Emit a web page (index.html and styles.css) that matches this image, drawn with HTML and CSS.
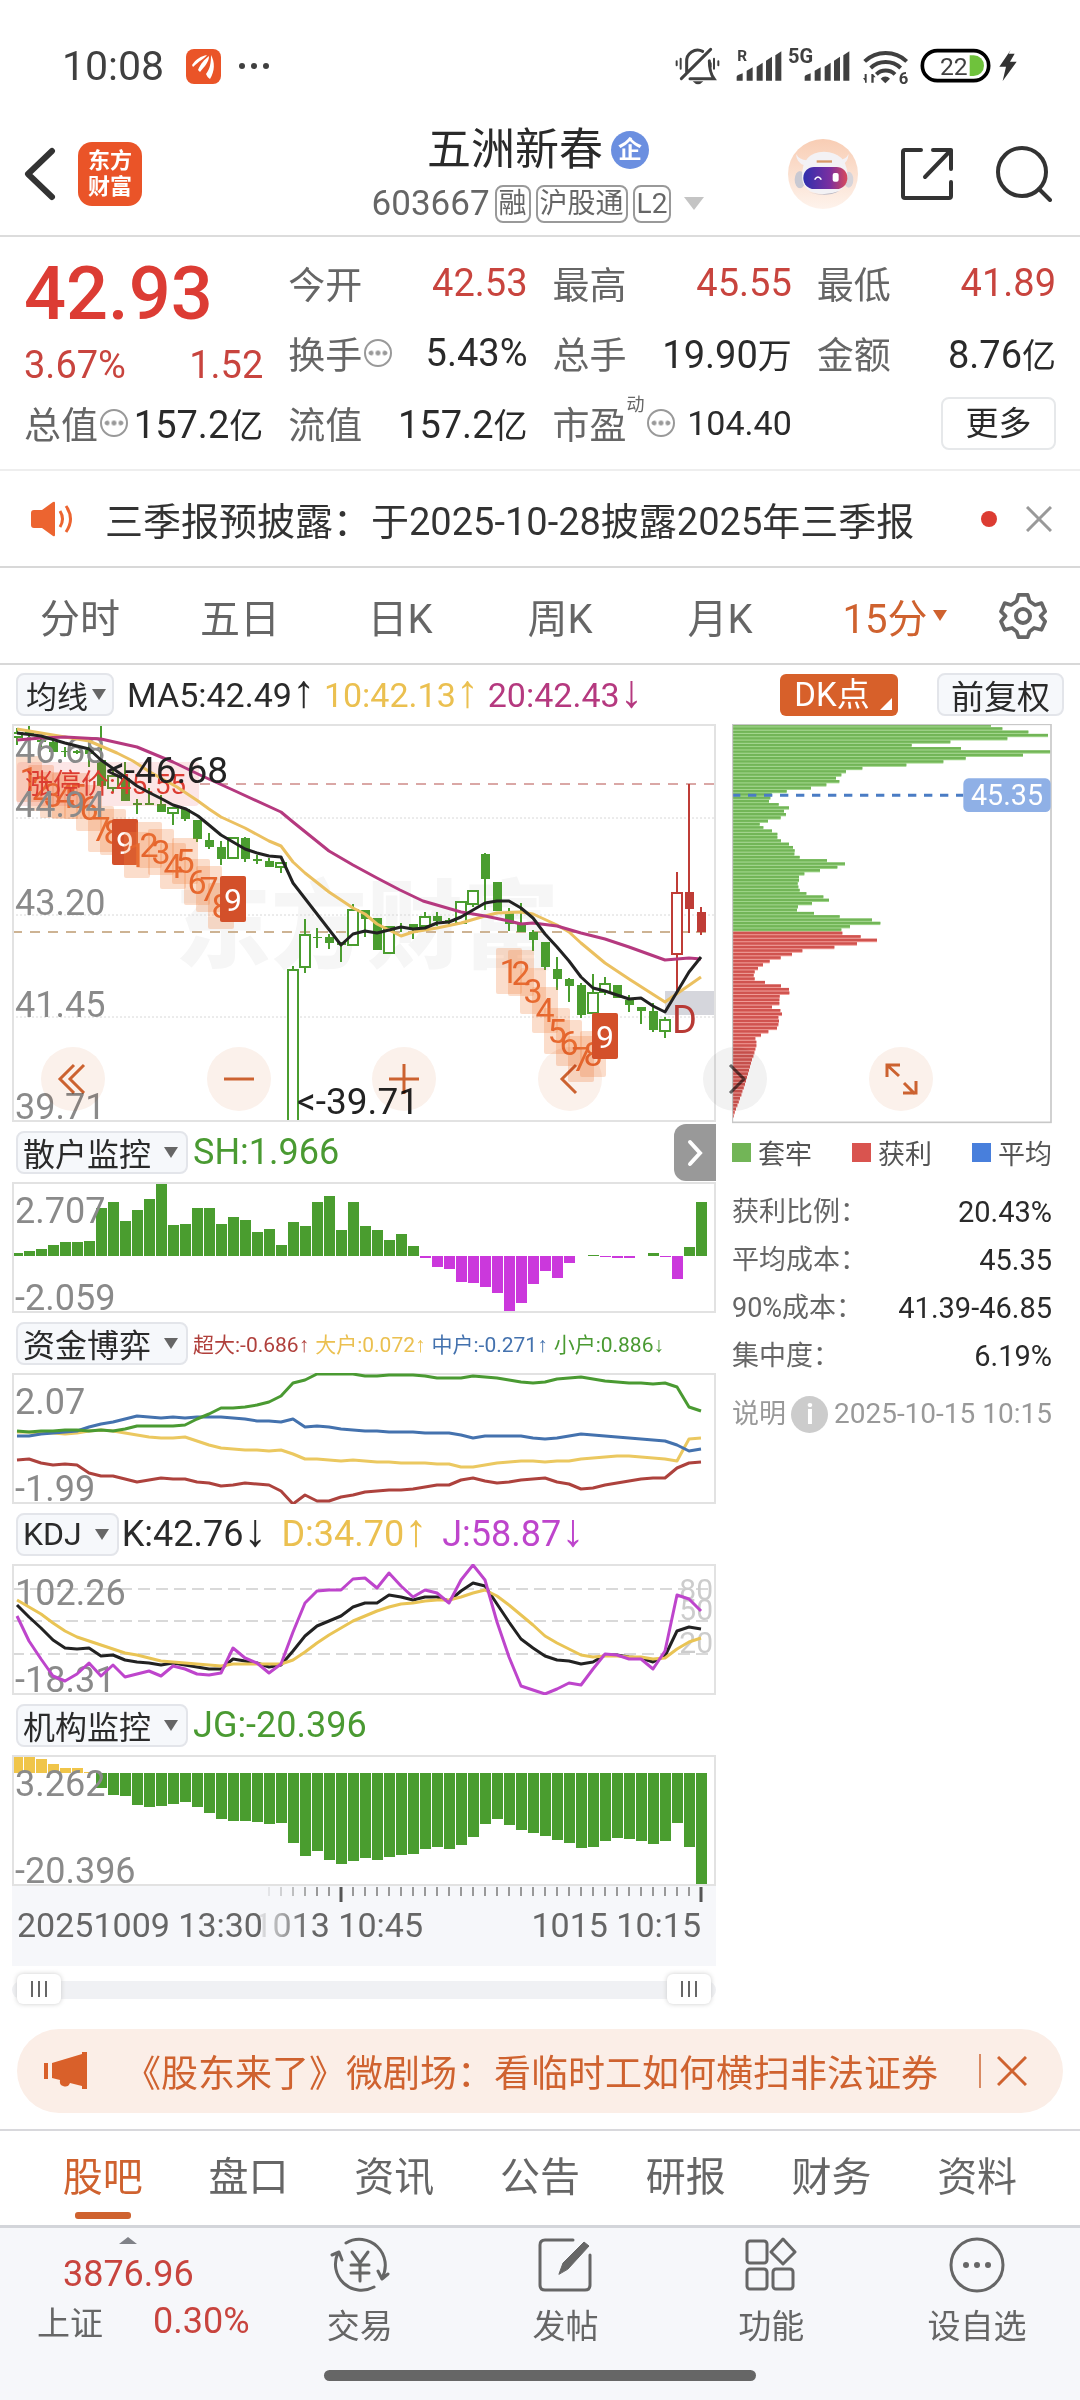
FILE: index.html
```html
<!DOCTYPE html>
<html lang="zh-CN">
<head>
<meta charset="utf-8">
<meta name="viewport" content="width=device-width, initial-scale=1">
<title>五洲新春 603667</title>
<link rel="stylesheet" href="styles.css">
</head>
<body>
<div class="status">
  <span class="clock">10:08</span>
  <svg class="status-app" viewBox="0 0 35 35" aria-hidden="true"><rect width="35" height="35" rx="8" fill="#ea5428"/><g fill="#fff"><path d="M6 16c4-6 9-9 15-10-3 4-8 6-14 12z"/><path d="M12 21c3-7 6-10 11-14 0 6-4 10-9 16z"/><path d="M25 6c4 7 4 16-1 24-2-1-3-3-4-5 4-5 5-11 5-19z"/></g></svg>
  <span class="more-dots"><i></i><i></i><i></i></span>
  <svg class="status-icons" viewBox="70 45 1032 129" aria-hidden="true">
    <g fill="none" stroke="#404040" stroke-width="9" stroke-linecap="round">
      <path d="M108 130V96a33 33 0 0 1 48-32M176 92c0 26 4 40 14 54H118M92 146l88-88"/>
      <path stroke-width="6" d="M78 94v12M90 86v30M190 86v30M203 94v12M180 100v10"/>
    </g>
    <path fill="#404040" d="M126 154h32q-16 18-32 0z"/>
    <g class="st-text"><text x="260" y="94" font-size="46">R</text><text x="412" y="98" font-size="60">5G</text><text x="744" y="162" font-size="50">6</text></g>
    <g fill="#404040">
      <path d="M258 152v-12q0-4 18-10v22zM288 152v-30l18-10v40zM318 152v-42l18-12v54zM346 152V92l18-12v72zM374 152V76l18-12v88z"/>
      <path d="M462 152v-12q0-4 18-10v22zM492 152v-30l18-10v40zM522 152v-42l18-12v54zM550 152V92l18-12v72zM578 152V76l18-12v88z"/>
      <path d="M690 146a19 19 0 0 1 28 0l-14 14z"/>
      <path d="M648 132v26h-5v-6l-6-8h5v-12zM662 132h5l8 10h-6v16h-7z"/>
    </g>
    <g fill="none" stroke="#404040" stroke-width="12"><path d="M642 94a92 92 0 0 1 126 0M660 114a66 66 0 0 1 90 0M677 133a40 40 0 0 1 56 0"/></g>
    <rect x="815" y="62" width="199" height="90" rx="45" fill="#fff" stroke="#000" stroke-width="11"/>
    <path d="M957 76h12a31 31 0 0 1 0 62h-12z" fill="#6fc23c"/>
    <text x="868" y="134" font-size="74" fill="#404040">22</text>
    <path d="M1080 60l-34 50h20l-10 43 42-58h-20l14-24h-18z" fill="#333"/>
  </svg>
</div>

<header class="header">
  <div class="header-left">
    <button class="bare" aria-label="返回"><svg width="32" height="56" viewBox="0 0 32 56"><path d="M28 5L4 28l24 23" class="ink" stroke-width="6"/></svg></button>
    <span class="brand">东方<br>财富</span>
  </div>
  <div class="stock">
    <h1>五洲新春<span class="corp">企</span></h1>
    <div class="code">603667<span class="tag">融</span><span class="tag">沪股通</span><span class="tag">L2</span><span class="tri tri-light"></span></div>
  </div>
  <div class="header-right">
    <button class="bare" aria-label="智能助手"><svg width="70" height="70" viewBox="0 0 210 210">
      <defs><linearGradient id="halo" x2="0" y2="1"><stop stop-color="#f8cdb4"/><stop offset="1" stop-color="#fef3ec"/></linearGradient><linearGradient id="visor"><stop stop-color="#2f2fae"/><stop offset=".6" stop-color="#7a2fa0"/><stop offset="1" stop-color="#d94a5a"/></linearGradient></defs>
      <circle cx="105" cy="105" r="105" fill="url(#halo)"/>
      <path d="M24 45q2 26 24 34l14-16Q36 66 24 45zM182 45q-2 26-22 34l-14-16q26 2 36-18z" fill="#f4f1f4"/>
      <ellipse cx="36" cy="122" rx="16" ry="26" fill="#c9c9d2"/><ellipse cx="182" cy="122" rx="14" ry="24" fill="#d6d4da"/>
      <path d="M42 112q0-72 66-74 66 2 70 66 4 58-70 62-66-2-66-54z" fill="#f3f2f5"/>
      <path d="M60 158q46 16 94-2-44 22-94 2z" fill="#b9b7c2"/>
      <rect x="46" y="84" width="132" height="66" rx="32" fill="url(#visor)"/>
      <path d="M80 122q10-16 20 0" fill="none" stroke="#fff" stroke-width="5"/><rect x="134" y="102" width="18" height="26" rx="6" fill="#fff"/><path d="M86 64h46v7H86z" fill="#d99a68"/></svg></button>
    <button class="bare" aria-label="分享"><svg width="54" height="54" viewBox="0 0 54 54"><path class="ink" stroke-width="4" d="M21 3H5q-2 0-2 2v44q0 2 2 2h44q2 0 2-2V35M33 3h18v19M51 3L25 30"/></svg></button>
    <button class="bare" aria-label="搜索"><svg width="56" height="56" viewBox="0 0 56 56"><circle class="ink" stroke-width="4" cx="26" cy="26" r="24"/><path class="ink" stroke-width="4" d="M43 43l11 11"/></svg></button>
  </div>
</header>

<section class="quote">
  <div class="price"><strong>42.93</strong><div><span>3.67%</span><span>1.52</span></div></div>
  <div class="cell"><span>今开</span><b class="up">42.53</b></div>
  <div class="cell"><span>最高</span><b class="up">45.55</b></div>
  <div class="cell"><span>最低</span><b class="up">41.89</b></div>
  <div class="cell"><span>换手<i class="tip"></i></span><b>5.43%</b></div>
  <div class="cell"><span>总手</span><b>19.90<em>万</em></b></div>
  <div class="cell"><span>金额</span><b>8.76<em>亿</em></b></div>
  <div class="cell"><span>总值<i class="tip"></i></span><b>157.2<em>亿</em></b></div>
  <div class="cell"><span>流值</span><b>157.2<em>亿</em></b></div>
  <div class="cell"><span>市盈<sup>动</sup><i class="tip"></i></span><b class="small">104.40</b></div>
  <div class="cell cell-end"><button class="more">更多</button></div>
</section>

<div class="notice">
  <svg width="44" height="36" viewBox="0 0 44 36" aria-hidden="true"><path d="M3 9h8L22 1q2-1 2 1v32q0 2-2 1L11 27H3q-3 0-3-3V12q0-3 3-3z" fill="#ec6430"/><path d="M29 10q5 8 0 16M35 5q9 13 0 26" fill="none" stroke="#ec6430" stroke-width="3"/></svg>
  <a href="#notice">三季报预披露：于2025-10-28披露2025年三季报</a>
  <span class="dot"></span>
  <button class="bare" aria-label="关闭"><svg width="26" height="26" viewBox="0 0 26 26"><path d="M1 1l24 24M25 1L1 25" stroke="#999" stroke-width="3"/></svg></button>
</div>

<nav class="periods">
  <a href="#m">分时</a><a href="#d5">五日</a><a href="#d">日K</a><a href="#w">周K</a><a href="#mo">月K</a>
  <a href="#m15" class="on">15分<span class="tri tri-on"></span></a>
  <button class="bare" aria-label="设置"><svg width="48" height="50" viewBox="0 0 48 50"><path d="M19 2h10l2 7 6 4 7-2 4 9-5 5 5 6-4 9-8-2-5 4-2 6H19l-2-6-5-4-8 2-4-9 5-6-5-5 4-9 7 2 6-4z" transform="translate(2 2) scale(.92)" fill="none" stroke="#666" stroke-width="4" stroke-linejoin="round"/><circle cx="24" cy="25" r="7" fill="none" stroke="#666" stroke-width="4"/></svg></button>
</nav>

<div class="ma">
  <button class="pick pick-tight">均线<span class="tri"></span></button>
  <span class="ma-vals"><span>MA5:42.49<i class="arrow">↑</i></span><span class="gold">10:42.13<i class="arrow">↑</i></span><span class="plum">20:42.43<i class="arrow">↓</i></span></span>
  <button class="dk">DK点</button>
  <button class="pick">前复权</button>
</div>

<main class="charts">
  <div class="left">
    <svg id="kline" class="plot" viewBox="0 0 704 398" role="img" aria-label="15分K线">
      <text class="mark" x="163" y="236">东方财富</text>
      <g class="grid"><path d="M0 94H704M0 191H704M0 293H704"/></g>
      <path d="M188 60H704" stroke="#b5504c" stroke-dasharray="10 8"/>
      <path d="M0 208H704" stroke="#cdb393" stroke-width="2" stroke-dasharray="10 8"/>
      <rect x="653" y="267" width="51" height="24" fill="#d5d6dc"/>
      <g id="candles"></g>
      <g id="td"></g>
      <rect x="5" y="38" width="182" height="44" rx="4" fill="#e84040" fill-opacity=".13"/>
      <text x="13" y="70" font-size="28" fill="#dc3c32">涨停价:45.55</text>
      <g class="axis"><text x="3" y="39">46.68</text><text x="3" y="93">44.94</text><text x="3" y="191">43.20</text><text x="3" y="293">41.45</text><text x="3" y="395">39.71</text></g>
      <g id="averages"></g>
      <g class="note"><text x="94" y="59">&lt;-46.68</text><text x="285" y="390">&lt;-39.71</text></g>
      <text x="660" y="309" font-size="38" fill="#b83a35">D</text>
      <rect class="frame" x="1" y="1" width="702" height="396"/>
    </svg>

    <div class="sub-head"><button class="pick">散户监控<span class="tri"></span></button><span class="green">SH:1.966</span><button class="next" aria-label="展开"><svg width="16" height="28" viewBox="0 0 16 28"><path d="M3 3l10 11L3 25" fill="none" stroke="#fff" stroke-width="4" stroke-linecap="round"/></svg></button></div>
    <svg id="retail" class="plot" viewBox="0 0 704 131" role="img" aria-label="散户监控"><g class="bars"></g><g class="axis"><text x="3" y="41">2.707</text><text x="3" y="128">-2.059</text></g><rect class="frame" x="1" y="1" width="702" height="129"/></svg>

    <div class="sub-head"><button class="pick">资金博弈<span class="tri"></span></button><span class="flow"><span class="red">超大:-0.686↑</span><span class="gold">大户:0.072↑</span><span class="blue">中户:-0.271↑</span><span class="green">小户:0.886↓</span></span></div>
    <svg id="flow" class="plot" viewBox="0 0 704 131" role="img" aria-label="资金博弈"><rect class="frame" x="1" y="1" width="702" height="129"/><g class="axis"><text x="3" y="41">2.07</text><text x="3" y="128">-1.99</text></g><g class="lines"></g></svg>

    <div class="sub-head kdj"><button class="pick">KDJ<span class="tri"></span></button><span>K:42.76<i class="arrow">↓</i></span><span class="gold">D:34.70<i class="arrow">↑</i></span><span class="violet">J:58.87<i class="arrow">↓</i></span></div>
    <svg id="kdj" class="plot" viewBox="0 0 704 131" role="img" aria-label="KDJ"><path d="M0 25H704M0 57H704M0 90H704" stroke="#d9d9d9" stroke-width="2" stroke-dasharray="12 6"/><rect class="frame" x="1" y="1" width="702" height="129"/><g class="axis"><text x="3" y="41">102.26</text><text x="3" y="128">-18.31</text></g><g class="levels"><text x="701" y="36">80</text><text x="701" y="56">50</text><text x="701" y="89">20</text></g><g class="lines"></g></svg>

    <div class="sub-head"><button class="pick">机构监控<span class="tri"></span></button><span class="green">JG:-20.396</span></div>
    <svg id="inst" class="plot" viewBox="0 0 704 131" role="img" aria-label="机构监控"><g class="bars"></g><g class="axis"><text x="3" y="41">3.262</text><text x="3" y="128">-20.396</text></g><rect class="frame" x="1" y="1" width="702" height="129"/></svg>

    <svg id="time" class="plot time" viewBox="0 0 704 80" role="img" aria-label="时间轴">
      <defs><linearGradient id="fade"><stop offset=".04" stop-color="#666" stop-opacity=".15"/><stop offset=".32" stop-color="#666"/></linearGradient></defs>
      <g class="ticks"></g>
      <text x="5" y="51">20251009 13:30</text><text x="411" y="51" text-anchor="end" fill="url(#fade)">1013 10:45</text><text x="689" y="51" text-anchor="end">1015 10:15</text>
    </svg>
    <div class="range"><input type="range" value="0" aria-label="起始"><input type="range" value="100" aria-label="结束"></div>
  </div>

  <aside class="right">
    <svg id="chips" class="plot" viewBox="98 192 960 1200" role="img" aria-label="筹码分布">
      <g class="bars"></g>
      <path d="M98 406H792" stroke="#4a7cc4" stroke-width="9" stroke-dasharray="25 23"/>
      <rect x="99" y="193" width="956" height="1194" fill="none" stroke="#c8c8c8" stroke-width="5"/>
      <rect x="792" y="355" width="262" height="101" rx="16" fill="#8fb0e6"/>
      <text x="923" y="436" text-anchor="middle" font-size="86" fill="#fff">45.35</text>
    </svg>
    <div class="legend"><span><i class="k1"></i>套牢</span><span><i class="k2"></i>获利</span><span><i class="k3"></i>平均</span></div>
    <dl class="stats">
      <div><dt>获利比例：</dt><dd>20.43%</dd></div>
      <div><dt>平均成本：</dt><dd>45.35</dd></div>
      <div><dt>90%成本：</dt><dd>41.39-46.85</dd></div>
      <div><dt>集中度：</dt><dd>6.19%</dd></div>
    </dl>
    <div class="asof"><span>说明</span><i>i</i><time>2025-10-15 10:15</time></div>
  </aside>

  <div class="tools">
    <button aria-label="最早"><svg viewBox="0 0 64 64"><path d="M33 18L19 32l14 14M43 18L29 32l14 14"/></svg></button>
    <button aria-label="缩小"><svg viewBox="0 0 64 64"><path d="M17 32h30"/></svg></button>
    <button aria-label="放大"><svg viewBox="0 0 64 64"><path d="M17 32h30M32 17v30"/></svg></button>
    <button aria-label="左移"><svg viewBox="0 0 64 64"><path d="M38 18L24 32l14 14"/></svg></button>
    <button aria-label="右移" class="off"><svg viewBox="0 0 64 64"><path d="M27 18l14 14-14 14"/></svg></button>
    <button aria-label="全屏"><svg viewBox="0 0 64 64"><path d="M30 29L18 18M18 30V18h13M35 36l11 11M47 34v12H34"/></svg></button>
  </div>
</main>

<div class="banner">
  <svg width="44" height="38" viewBox="0 0 44 38" aria-hidden="true"><path d="M0 11h4v16H0zM8 11l30-9V0h5v37h-5v-3l-12-3q-2 5-7 3-4-1-3-6l-8-2z" fill="#d9602a"/></svg>
  <a href="#promo">《股东来了》微剧场：看临时工如何横扫非法证券</a>
  <button class="bare" aria-label="关闭广告"><svg width="30" height="30" viewBox="0 0 30 30"><path d="M1 1l28 28M29 1L1 29" stroke="#cf622f" stroke-width="3"/></svg></button>
</div>

<nav class="tabs"><a href="#bar" class="on">股吧</a><a href="#pk">盘口</a><a href="#zx">资讯</a><a href="#gg">公告</a><a href="#yb">研报</a><a href="#cw">财务</a><a href="#zl">资料</a></nav>

<footer class="dock">
  <div class="dock-row">
    <div class="index"><span class="tri-up"></span><b>3876.96</b><div><span>上证</span><b>0.30%</b></div></div>
    <button><svg viewBox="0 0 60 56"><path d="M16 6a26 26 0 0 1 36 35M44 50A26 26 0 0 1 8 16M2 18l7-3 3 8M58 37l-6 5-4-8"/><path d="M22 15l8 11 8-11M30 26v18M21 28h18M21 36h18"/></svg>交易</button>
    <button><svg viewBox="0 0 60 56"><path d="M38 3H10q-5 0-5 5v40q0 5 5 5h40q5 0 5-5V18"/><path d="M24 37l4-11L49 5l5 4-21 23z" fill="#666" stroke-width="1"/></svg>发帖</button>
    <button><svg viewBox="0 0 60 56"><rect x="6" y="4" width="20" height="22" rx="3"/><rect x="6" y="32" width="20" height="20" rx="3"/><rect x="32" y="32" width="20" height="20" rx="3"/><path d="M42 2l12 13-12 12-12-12z"/></svg>功能</button>
    <button><svg viewBox="0 0 60 56"><circle cx="30" cy="28" r="26"/><g fill="#666" stroke="none"><circle cx="19" cy="28" r="3"/><circle cx="30" cy="28" r="3"/><circle cx="41" cy="28" r="3"/></g></svg>设自选</button>
  </div>
  <div class="home"></div>
</footer>
<script src="script.js"></script>
</body>
</html>
```
FILE: styles.css
```css
* { box-sizing: border-box; }
body { margin: 0; background: #fff; color: #2a2a2a; font-family: Roboto, "Liberation Sans", "Noto Sans CJK SC", sans-serif; }
a { color: inherit; text-decoration: none; }
button { font: inherit; color: inherit; cursor: pointer; padding: 0; border: 0; background: none; }
svg { display: block; flex: none; }
b { font-weight: 400; }
em { font-style: normal; font-size: 34px; }
.ink { fill: none; stroke: #333; stroke-linecap: round; stroke-linejoin: round; }
.green { color: #4a9a32; }
.gold { color: #ebc050; }
.plum { color: #b5397f; }
.violet { color: #be45cc; }
.blue { color: #4472ae; }
.red { color: #b0403c; }
.arrow { font: 46px/20px "Liberation Sans", sans-serif; }

.tri { display: inline-block; border: 7px solid transparent; border-top: 11px solid #666; border-bottom: 0; }
.tri-light { border-width: 13px 10px 0; border-top-color: #c4c4c4; margin-left: 8px; }
.tri-on { border-top-color: #cf622f; margin-left: 6px; }

.status { display: flex; align-items: center; min-height: 120px; padding: 12px 62px 0 62px; }
.clock { font-size: 41px; color: #404040; }
.status-app { width: 35px; margin-left: 22px; }
.more-dots { display: flex; gap: 6px; margin-left: 18px; }
.more-dots i { width: 6px; height: 6px; border-radius: 50%; background: #404040; }
.status-icons { width: 344px; margin-left: auto; }
.st-text text { font-weight: 700; fill: #404040; }

.header { display: grid; grid-template-columns: 1fr auto 1fr; align-items: center; min-height: 117px; padding: 0 28px 8px 24px; border-bottom: 2px solid #dcdcdc; }
.header-left, .header-right { display: flex; align-items: center; }
.header-left { gap: 22px; }
.header-right { justify-content: flex-end; gap: 42px; }
.brand { display: grid; place-content: center; width: 64px; height: 64px; border-radius: 14px; background: #ea5428; color: #fff; font-size: 22px; line-height: 26px; font-weight: 700; }
.stock { text-align: center; }
h1 { display: flex; justify-content: center; align-items: center; gap: 8px; margin: 0 0 4px; font-size: 44px; line-height: 56px; font-weight: 400; }
.corp { width: 38px; line-height: 38px; border-radius: 50%; background: #6b8fe0; color: #fff; font-size: 24px; font-weight: 700; }
.code { display: flex; align-items: center; justify-content: center; gap: 5px; font-size: 35px; line-height: 44px; color: #666; }
.tag { border: 2px solid #999; border-radius: 8px; padding: 0 2px; font-size: 28px; line-height: 34px; }

.quote { display: grid; grid-template-columns: repeat(4, 1fr); grid-auto-rows: 70px; column-gap: 25px; padding: 11px 24px; border-bottom: 2px solid #eee; }
.price { grid-row: span 2; color: #dc3c34; }
.price strong { display: block; font-size: 74px; line-height: 92px; font-weight: 500; }
.price div { display: flex; justify-content: space-between; font-size: 38px; line-height: 50px; color: #c8443e; }
.cell { display: flex; align-items: center; justify-content: space-between; font-size: 38px; }
.cell > span { display: flex; align-items: center; font-size: 37px; color: #666; }
.cell .small { font-size: 34px; }
.cell-end { justify-content: flex-end; }
.up { color: #c8443e; }
.tip { width: 28px; height: 28px; margin-left: 2px; border: 2px solid #999; border-radius: 50%; background: radial-gradient(circle, #999 2px, transparent 3px) center / 7px 7px; background-clip: content-box; padding: 8px 2px; }
sup { font-size: 18px; align-self: flex-start; line-height: 18px; }
.more { border: 2px solid #e6e8ea; border-radius: 8px; width: 115px; line-height: 49px; font-size: 33px; }

.notice { display: flex; align-items: center; min-height: 97px; padding: 0 28px 0 31px; border-bottom: 2px solid #d8d8d8; font-size: 38px; color: #333; }
.notice a { margin: 0 auto 0 30px; white-space: nowrap; }
.dot { width: 16px; height: 16px; border-radius: 50%; background: #dc3c32; margin-right: 29px; }

.periods { display: grid; grid-template-columns: 160fr 160fr 160fr 160fr 160fr 190fr 66fr; align-items: center; justify-items: center; min-height: 97px; padding-right: 24px; border-bottom: 2px solid #d8d8d8; font-size: 40px; color: #666; }
.periods a { display: flex; align-items: center; }
.on { color: #cf622f; }

.pick { display: flex; align-items: center; gap: 13px; height: 43px; padding: 0 8px 0 5px; border: 2px solid #e3e5ea; border-radius: 8px; background: #f6f8fb; color: #2a2a2a; font-size: 32px; white-space: nowrap; }
.pick-tight { gap: 4px; padding: 0 6px 0 8px; font-size: 31px; }
.ma { display: flex; align-items: center; min-height: 59px; padding: 0 16px; }
.ma-vals { display: flex; gap: 9px; margin-left: 13px; font-size: 34px; }
.dk { position: relative; margin-left: auto; width: 118px; height: 42px; padding-right: 14px; border-radius: 6px; background: #d7602a; color: #fff; font-size: 33px; line-height: 36px; }
.dk::after { content: ""; position: absolute; right: 6px; bottom: 6px; border: 6px solid #fff; border-top-color: transparent; border-left-color: transparent; }
.dk + .pick { margin-left: 39px; padding: 0 12px; font-size: 33px; }

.charts { position: relative; display: grid; grid-template-columns: 704fr 320fr; column-gap: 16px; align-items: start; padding: 0 28px 0 12px; }
.left, .right { min-width: 0; }
.plot { width: 100%; height: auto; }
.frame { fill: none; stroke: #e2e2e2; stroke-width: 2; }
.grid path { stroke: #d8d8d8; stroke-dasharray: 2 2; }
.axis text { font-size: 36px; fill: #8a8a8a; }
.levels text { font-size: 30px; fill: #ccc; text-anchor: end; }
.note text { font-size: 37px; fill: #222; }
.mark { font-size: 96px; font-weight: 900; fill: #f6f6f6; }
.lines path, #averages path { fill: none; stroke-width: 3; stroke-linejoin: round; }
.time { background: #f6f7fa; font-size: 34px; fill: #666; }

.sub-head { position: relative; display: flex; align-items: center; gap: 5px; min-height: 60px; padding-left: 4px; font-size: 36px; white-space: nowrap; }
.flow { display: flex; gap: 6px; font-size: 21px; }
.kdj { gap: 3px; }
.kdj .gold, .kdj .violet { margin-left: 12px; }
.next { position: absolute; right: 0; top: 2px; width: 42px; height: 57px; display: grid; place-content: center; border-radius: 12px 0 0 12px; background: #999; }

.range { position: relative; height: 63px; }
.range::before { content: ""; position: absolute; left: 0; right: 0; top: 15px; height: 18px; border-radius: 9px; background: #f0f1f4; }
.range input { position: absolute; left: 5px; right: 5px; top: 8px; width: calc(100% - 10px); height: 30px; margin: 0; appearance: none; background: none; pointer-events: none; }
.range input::-webkit-slider-thumb { appearance: none; pointer-events: auto; width: 44px; height: 30px; border-radius: 6px; box-shadow: 0 0 5px #ccc; background: repeating-linear-gradient(90deg, #666 0 2px, #fff 2px 7px) center / 16px 16px no-repeat, #fff; }

.legend { display: flex; justify-content: space-between; min-height: 56px; align-items: center; font-size: 27px; color: #555; }
.legend span { display: flex; align-items: center; gap: 7px; }
.legend i { width: 19px; height: 19px; }
.k1 { background: #72b557; }
.k2 { background: #d9544f; }
.k3 { background: #487fdc; }
.stats { margin: 8px 0 14px; }
.stats div { display: flex; justify-content: space-between; line-height: 48px; font-size: 27px; color: #666; white-space: nowrap; }
.stats dd { margin: 0; font-size: 29px; color: #2a2a2a; }
.stats dt { width: 150px; }
.asof { display: flex; align-items: center; justify-content: space-between; font-size: 27px; line-height: 40px; color: #999; white-space: nowrap; }
.asof i { width: 37px; border-radius: 50%; background: #ccc; color: #fff; text-align: center; font: 700 28px/37px Roboto, sans-serif; }
.asof time { font-size: 28px; }

.tools { position: absolute; left: 41px; right: 147px; top: 323px; display: flex; justify-content: space-between; mix-blend-mode: multiply; }
.tools button { width: 64px; height: 64px; border-radius: 50%; background: #fbf1eb; }
.tools svg { fill: none; stroke: #cc6230; stroke-width: 3; }
.tools .off { background: #f2f2f2; }
.tools .off svg { stroke: #666; }

.banner { display: flex; align-items: center; min-height: 84px; margin: 0 17px 16px; padding: 0 36px 0 27px; border-radius: 42px; background: #fbeee7; color: #cf622f; font-size: 37px; }
.banner a { margin: 0 auto 0 36px; white-space: nowrap; }
.banner button { border-left: 2px solid #d98a62; padding: 2px 0 2px 16px; }

.tabs { display: grid; grid-template-columns: repeat(7, 1fr); padding: 0 30px; border-top: 2px solid #d8d8dc; border-bottom: 3px solid #d3d5da; font-size: 40px; line-height: 94px; text-align: center; color: #666; }
.tabs a { position: relative; }
.tabs .on { color: #cf622f; }
.tabs .on::after { content: ""; position: absolute; left: calc(50% - 28px); bottom: 6px; width: 56px; height: 7px; border-radius: 3px; background: #cf622f; }

.dock { background: #f6f7fa; color: #666; padding-bottom: 22px; }
.dock-row { display: grid; grid-template-columns: 257fr 206fr 206fr 206fr 206fr; min-height: 142px; font-size: 33px; }
.dock button { display: flex; flex-direction: column; align-items: center; gap: 12px; padding-top: 9px; line-height: 44px; }
.dock button svg { width: 60px; height: 56px; fill: none; stroke: #666; stroke-width: 3; stroke-linecap: round; stroke-linejoin: round; }
.index { display: flex; flex-direction: column; align-items: center; padding-top: 9px; }
.index b { font-size: 36px; line-height: 46px; color: #c8443e; }
.index > b { margin-top: 7px; }
.index div { display: flex; gap: 50px; align-items: center; padding-left: 30px; }
.tri-up { border: 9px solid transparent; border-top: 0; border-bottom: 7px solid #808288; }
.home { width: 40%; height: 11px; margin: 0 auto; border-radius: 6px; background: #666; }
```
FILE: script.js
```js
const STEP = 12;
const centre = i => 5 + STEP * i;
const put = (sel, html) => { document.querySelector(sel).innerHTML = html; };

// [high, body top, body bottom, low, hollow]
const candles = [
  [4,8,13,21,1],[1,7,10,14],[13,16,18,23],[16,18,28,28],[23,27,28,33],[26,27,29,30],[19,26,30,43],[0,36,62,63],
  [46,51,64,68,1],[38,54,77,77],[75,79,81,90],[64,79,81,81],[71,80,88,88],[83,83,89,101,1],[85,85,95,97],
  [96,96,115,118],[109,116,123,125],[117,123,135,141],[113,113,134,134,1],[113,114,135,138],[131,135,137,140],
  [134,137,143,143],[138,138,143,149,1],[242,245,398,398,1],[195,210,243,249,1],[204,213,214,224],[210,213,219,225],
  [218,218,221,238],[180,185,221,221,1],[186,186,195,213],[194,194,226,226],[202,202,229,229,1],[199,203,204,208],
  [200,200,205,215],[188,192,202,204,1],[188,192,197,202],[194,196,198,201],[177,177,199,199,1],[166,166,180,183,1],
  [129,130,155,186],[158,158,187,187],[184,189,200,207],[179,199,208,208],[206,208,216,227],[218,218,243,246],
  [233,245,255,266],[254,255,262,278],[259,261,291,294],[250,268,289,289,1],[253,259,268,271,1],[261,261,274,274],
  [271,276,281,288],[283,283,287,300],[279,287,306,308],[293,295,307,314,1],[148,168,230,271,1],[60,168,185,209],[183,188,208,211]
];
put('#candles', candles.map(([h, t, b, l, hollow], i) => {
  const c = centre(i), col = i > 54 ? '#bf3c36' : '#4a9d2f';
  const body = hollow
    ? `<rect x="${c - 5}" y="${t + 1}" width="10" height="${Math.max(b - t - 1, 3)}" fill="#fff" stroke="${col}" stroke-width="2"/>`
    : `<rect x="${c - 4}" y="${t}" width="9" height="${b - t}" fill="${col}"/>`;
  return `<path d="M${c} ${h}V${l}" stroke="${col}" stroke-width="2"/>${body}`;
}).join(''));

// Nine-count markers: first candle of the run, then the top of each box
const runs = [
  [1, [32,41,48,49,49,61,82,85,95]],
  [10, [108,98,105,119,114,135,142,159,152]],
  [41, [224,226,244,263,284,296,312,307,289]]
];
put('#td', runs.map(([start, tops]) => tops.map((y, k) => {
  const c = centre(start + k), nine = k === 8;
  return `<rect x="${c - 13}" y="${y}" width="26" height="46" rx="2" fill="${nine ? '#d3502a' : '#f08040'}" fill-opacity="${nine ? 1 : 0.27}"/>` +
    `<text x="${c}" y="${y + 35}" text-anchor="middle" font-size="${nine ? 32 : 34}" fill="${nine ? '#fff' : '#e5652d'}">${k + 1}</text>`;
}).join('')).join(''));

put('#averages', [
  ['#ebc060', '5,5 29,9 53,13 77,17 105,29 121,37 138,48 165,63 186,77 197,85 209,93 233,104 257,117 269,122 281,138 293,149 317,168 341,184 353,190 365,200 389,212 401,208 425,204 449,199 473,192 485,189 509,188 521,190 545,201 557,208 569,219 593,239 617,255 653,278 689,253'],
  ['#b5397f', '5,16 29,14 53,13 89,15 125,23 161,38 188,51 221,66 269,88 281,98 317,127 341,141 365,154 388,166 411,177 449,188 473,192 497,197 509,200 521,199 545,202 569,209 593,215 617,223 653,236 677,234 689,235'],
  ['#222', '5,9 29,12 53,19 77,25 89,36 113,53 125,62 138,69 150,75 161,81 174,85 186,92 197,101 209,111 221,118 233,125 245,129 257,132 269,133 281,159 329,221 341,210 353,207 365,209 389,203 401,205 413,204 425,199 437,198 449,193 461,186 473,179 485,177 497,177 509,184 521,194 533,210 545,223 557,237 569,253 581,264 593,267 605,271 617,275 629,274 641,282 653,288 665,268 677,248 689,233']
].map(([col, pts]) => `<path stroke="${col}" d="M${pts}"/>`).join(''));

const bars = (values, zero, up, down) => values.map((v, i) =>
  `<rect x="${STEP * i}" y="${v > 0 ? zero - v : zero}" width="11" height="${Math.abs(v)}" fill="${v > 0 ? up : down}"/>`).join('');

put('#retail .bars', bars([3,5,7,11,14,14,15,48,54,35,46,57,74,31,32,48,48,32,39,36,24,27,11,34,30,54,60,26,54,30,26,16,22,10,-2,-11,-13,-26,-27,-31,-37,-56,-47,-28,-15,-22,-7,0,1,-1,-2,-2,0,3,-1,-23,9,54], 74, '#4a9d2f', '#cb38dc'));
put('#inst .bars', bars([18,18,14,9,5,5,1,-15,-22,-23,-32,-34,-33,-31,-29,-34,-40,-46,-48,-48,-49,-51,-50,-70,-83,-78,-87,-91,-88,-85,-87,-84,-82,-81,-76,-74,-76,-72,-64,-51,-46,-52,-57,-60,-63,-67,-70,-75,-74,-68,-65,-66,-68,-71,-68,-50,-74,-113], 18, '#f0c54a', '#4a9d2f'));

const line = (col, ys) => `<path stroke="${col}" d="M${ys.map((y, i) => centre(i) + ',' + y).join(' ')}"/>`;
put('#flow .lines',
  line('#ebc860', [59,59,60,60,61,60,58,57,58,60,62,64,65,65,64,68,72,75,76,77,77,78,77,81,86,86,87,88,87,88,89,89,90,90,90,91,91,94,94,92,90,89,88,88,89,88,88,86,85,84,83,83,84,85,86,88,66,65]) +
  line('#4472ae', [63,63,61,60,59,58,54,51,49,46,43,44,45,44,45,44,44,44,45,46,48,48,49,46,54,53,54,56,57,58,58,59,59,59,60,60,60,62,65,63,63,63,63,65,66,65,63,61,62,63,64,65,66,67,68,72,78,76]) +
  line('#4a9a32', [58,59,58,58,57,57,58,57,58,56,53,53,53,53,52,46,41,35,35,34,32,29,23,10,7,1,1,1,1,3,3,2,2,2,3,5,5,5,3,4,5,7,9,10,9,6,5,4,6,8,9,10,10,11,10,14,34,38]) +
  line('#ad423d', [87,86,90,92,91,92,100,103,103,106,109,107,105,106,106,109,110,113,112,110,111,112,118,131,122,128,128,124,122,119,118,117,117,116,114,112,112,107,105,108,110,109,107,106,105,109,111,116,115,112,110,108,106,105,105,95,90,89]));
put('#kdj .lines',
  line('#222', [41,53,64,76,84,85,84,92,91,96,98,99,101,99,101,103,105,105,95,97,99,103,101,87,72,62,57,52,43,39,39,31,33,36,33,33,37,27,19,22,40,58,75,84,92,96,97,100,98,91,91,93,94,98,92,67,63,65]) +
  line('#e9c455', [36,43,50,59,67,73,77,81,85,89,91,94,97,98,99,100,101,102,100,100,100,100,100,96,88,79,71,64,57,52,47,43,40,39,37,36,36,33,29,26,32,41,51,61,72,79,85,91,93,92,92,93,93,95,94,85,78,74]) +
  line('#be45cc', [52,77,95,112,117,110,99,112,101,113,110,107,112,102,105,110,111,109,84,94,99,109,100,68,39,27,26,26,15,14,24,9,22,33,26,29,39,16,1,16,58,93,122,126,130,125,119,121,105,90,91,95,95,105,87,31,35,47]));

let ticks = '';
for (let i = 21; i < 58; i++) {
  const major = i === 27 || i === 57;
  ticks += `<path d="M${centre(i)} 1V${major ? 16 : 10}" stroke="${major ? '#555' : '#999'}" stroke-width="${major ? 3 : 2}" stroke-opacity="${Math.min(1, (i - 20) / 5)}"/>`;
}
put('#time .ticks', ticks);

// Chip distribution: right end of each price level's bar
const trapped = [875,909,987,1046,924,753,637,785,1053,971,799,732,621,489,440,426,410,420,381,335,262,217,213,209,238,269,254,260,244,206,181,192,218,234,234,245,269,281,286,285,301,383,437,414,362,315,299,299,295,297,301,321,372,389,338,296,293,344,421,518,543,452,426];
const profit = [429,484,533,473,405,309,278,244,211,191,176,166,163,166,197,245,269,270,241,240,240,218,243,248,237,239,237,233,207,185,168,171,171,168,165,162,158,155,152,149,146,143,140,137,133,129,126,122,118,114,110,106,103,101];
const levels = (ends, top, pitch, dark, light) => ends.map((x, i) =>
  `<rect x="98" y="${top + pitch * i}" width="${x - 98}" height="${pitch}" fill="${light}"/><rect x="98" y="${top + pitch * i}" width="${x - 98}" height="${pitch - 3}" fill="${dark}"/>`).join('');
put('#chips .bars', levels(trapped, 192, 9.89, '#72b557', '#a0d68a') + levels(profit, 815, 10.55, '#d0534f', '#f09a95'));
```
